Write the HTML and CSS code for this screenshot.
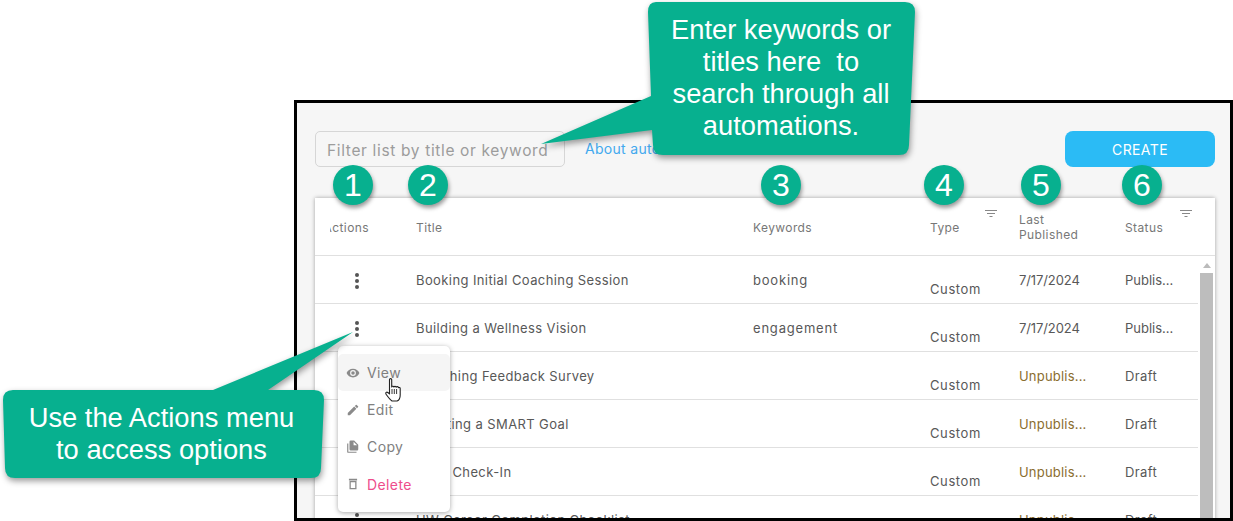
FILE: index.html
```html
<!DOCTYPE html>
<html lang="en">
<head>
    <meta charset="UTF-8">
    <meta name="viewport" content="width=device-width, initial-scale=1.0">
    <title>Automations</title>
    <link rel="stylesheet" href="styles.css">
</head>
<body>
    <div class="frame">
        <div class="toolbar">
            <div class="filter-input">Filter list by title or keyword</div>
            <a class="about-link">About automations</a>
            <button class="create-btn">CREATE</button>
        </div>

        <div class="card">
            <div class="row head">
                <div class="cell actions-head"><span>Actions</span></div>
                <div class="cell">Title</div>
                <div class="cell">Keywords</div>
                <div class="cell filter-cell type-head">
                    <span>Type</span>
                    <svg class="filter-icon" viewBox="0 0 12 7"><path d="M0 0h12v1H0zM2 3h8v1H2zM4.500 6h3v1h-3z"/></svg>
                </div>
                <div class="cell last-head">Last<br>Published</div>
                <div class="cell filter-cell status-head">
                    <span>Status</span>
                    <svg class="filter-icon" viewBox="0 0 12 7"><path d="M0 0h12v1H0zM2 3h8v1H2zM4.500 6h3v1h-3z"/></svg>
                </div>
            </div>

            <div class="body">
                <div class="rows">
                    <div class="row">
                        <div class="cell"><span class="kebab"><i></i><i></i><i></i></span></div>
                        <div class="cell">Booking Initial Coaching Session</div>
                        <div class="cell keyword">booking</div>
                        <div class="cell type">Custom</div>
                        <div class="cell date">7/17/2024</div>
                        <div class="cell published">Publis...</div>
                    </div>
                    <div class="row">
                        <div class="cell"><span class="kebab"><i></i><i></i><i></i></span></div>
                        <div class="cell">Building a Wellness Vision</div>
                        <div class="cell keyword">engagement</div>
                        <div class="cell type">Custom</div>
                        <div class="cell date">7/17/2024</div>
                        <div class="cell published">Publis...</div>
                    </div>
                    <div class="row">
                        <div class="cell"><span class="kebab"><i></i><i></i><i></i></span></div>
                        <div class="cell">Coaching Feedback Survey</div>
                        <div class="cell"></div>
                        <div class="cell type">Custom</div>
                        <div class="cell draft">Unpublis...</div>
                        <div class="cell">Draft</div>
                    </div>
                    <div class="row">
                        <div class="cell"><span class="kebab"><i></i><i></i><i></i></span></div>
                        <div class="cell">Creating a SMART Goal</div>
                        <div class="cell"></div>
                        <div class="cell type">Custom</div>
                        <div class="cell draft">Unpublis...</div>
                        <div class="cell">Draft</div>
                    </div>
                    <div class="row">
                        <div class="cell"><span class="kebab"><i></i><i></i><i></i></span></div>
                        <div class="cell">Daily Check-In</div>
                        <div class="cell"></div>
                        <div class="cell type">Custom</div>
                        <div class="cell draft">Unpublis...</div>
                        <div class="cell">Draft</div>
                    </div>
                    <div class="row">
                        <div class="cell"><span class="kebab"><i></i><i></i><i></i></span></div>
                        <div class="cell">HW Career Completion Checklist</div>
                        <div class="cell"></div>
                        <div class="cell type">Custom</div>
                        <div class="cell draft">Unpublis...</div>
                        <div class="cell">Draft</div>
                    </div>
                </div>
                <div class="scrollbar">
                    <div class="scroll-arrow"></div>
                    <div class="scroll-thumb"></div>
                </div>
            </div>
        </div>
    </div>

    <!-- actions menu -->
    <div class="menu">
        <div class="menu-item hover">
            <svg viewBox="0 0 24 24"><path d="M12 4.500C7 4.500 2.700 7.600 1 12c1.700 4.400 6 7.500 11 7.500s9.300-3.100 11-7.500c-1.700-4.400-6-7.500-11-7.500zM12 17a5 5 0 1 1 0-10 5 5 0 0 1 0 10zm0-8a3 3 0 1 0 0 6 3 3 0 0 0 0-6z"/></svg>
            <span>View</span>
        </div>
        <div class="menu-item">
            <svg viewBox="0 0 24 24"><path d="M3 17.250V21h3.750L17.810 9.940l-3.750-3.750L3 17.250zM20.710 7.040a1 1 0 0 0 0-1.410l-2.340-2.340a1 1 0 0 0-1.410 0l-1.830 1.830 3.750 3.750 1.830-1.830z"/></svg>
            <span>Edit</span>
        </div>
        <div class="menu-item">
            <svg viewBox="0 0 24 24"><path d="M4 6H2v14a2 2 0 0 0 2 2h14v-2H4V6zm10-5H8a2 2 0 0 0-2 2v13a2 2 0 0 0 2 2h11a2 2 0 0 0 2-2V8l-7-7zm-1 8V3l6 6h-6z"/></svg>
            <span>Copy</span>
        </div>
        <div class="menu-item delete">
            <svg viewBox="0 0 24 24"><path d="M5 3h14v3H5zM6 7h12v14H6zm2.200 2v10h7.600V9z" fill-rule="evenodd"/></svg>
            <span>Delete</span>
        </div>
    </div>

    <svg class="hand" viewBox="0 0 17 24">
        <path d="M4.500 1.600c0-1.300 2.200-1.300 2.200 0V9c0-1 2.100-1.200 2.300.1 0-1 2.100-1.100 2.300.2.100-.9 2.100-1 2.200.3.700-.4 1.700 0 1.700 1V17c0 3-1.700 5.500-3.100 6H7C5.500 22 3.800 20 1.600 17 .5 15.500.5 14.500 1.500 14.200c.9-.2 2 .6 3 1.800z" fill="#fff" stroke="#222" stroke-width="1.100" stroke-linejoin="round"/>
        <path d="M7 11v5M9.300 11v5M11.600 11v5" stroke="#222" stroke-width=".9" fill="none"/>
    </svg>

    <!-- callouts -->
    <svg class="callout-shape" viewBox="0 0 1233 521">
        <path d="M656 2H905Q915 2 915 12L909 145Q909 155 899 155H663Q653 155 653 145L652 130L541 144L651 96L648 12Q648 2 656 2Z"/>
        <path d="M13 390H213L353 332L268 390H314Q324 390 324 400L321 468Q321 478 311 478H15Q5 478 5 468L3 400Q3 390 13 390Z"/>
    </svg>
    <div class="callout callout-search">Enter keywords or<br>titles here&nbsp; to<br>search through all<br>automations.</div>
    <div class="callout callout-actions">Use the Actions menu<br>to access options</div>

    <div class="badge b1">1</div>
    <div class="badge b2">2</div>
    <div class="badge b3">3</div>
    <div class="badge b4">4</div>
    <div class="badge b5">5</div>
    <div class="badge b6">6</div>
</body>
</html>
```
FILE: styles.css
```css
* {
    margin: 0;
    padding: 0;
    box-sizing: border-box;
}

html, body {
    height: 521px;
    overflow: hidden;
}

body {
    position: relative;
    background: #fff;
    padding: 100px 0 0 294px;
    font-family: Inter, 'Open Sans', sans-serif;
    color: #585858;
}

.frame {
    height: 421px;
    width: 939px;
    border: 3px solid #000;
    background: #f6f6f6;
    padding: 28px 15px 0 18px;
    overflow: hidden;
}

.toolbar {
    display: flex;
    align-items: center;
    height: 36px;
    margin-bottom: 31px;
}

.filter-input {
    width: 250px;
    height: 36px;
    border: 1px solid #d6d6d6;
    border-radius: 5px;
    padding: 1px 11px 0;
    line-height: 36px;
    font-size: 15.5px;
    letter-spacing: 0.65px;
    white-space: nowrap;
    color: #9c9c9c;
}

.about-link {
    margin-left: 20px;
    padding-bottom: 2px;
    font-size: 14px;
    letter-spacing: 0.3px;
    color: #42a9ee;
}

.create-btn {
    margin-left: auto;
    width: 150px;
    height: 36px;
    border: 0;
    border-radius: 8px;
    background: #2bbbf5;
    color: #fff;
    font-family: inherit;
    font-size: 14px;
    letter-spacing: 0.4px;
}

.card {
    width: 900px;
    height: 340px;
    background: #fff;
    box-shadow: 0 0 4px rgba(0, 0, 0, 0.35);
}

.row {
    display: grid;
    grid-template-columns: 101px 337px 177px 89px 106px 73px;
    align-items: center;
    height: 48px;
    border-bottom: 1px solid #e0e0e0;
    font-size: 13px;
    letter-spacing: 0.4px;
}

.head {
    height: 58px;
    padding-top: 2px;
    font-size: 12px;
    color: #777;
    grid-template-columns: 101px 337px 177px 89px 106px 90px;
}

.actions-head {
    padding-left: 15px;
}

.actions-head span {
    display: block;
    width: 39px;
    overflow: hidden;
    white-space: nowrap;
    direction: rtl;
}

.filter-cell {
    display: flex;
    justify-content: space-between;
    height: 100%;
    align-items: center;
}

.type-head {
    padding-right: 22px;
}

.status-head {
    padding-right: 23px;
}

.filter-icon {
    width: 12px;
    height: 7px;
    align-self: flex-start;
    margin-top: 10px;
    fill: #888;
}

.last-head {
    line-height: 15px;
    padding-bottom: 2px;
}

.body {
    display: flex;
    height: 282px;
}

.rows {
    width: 883px;
}

.keyword {
    letter-spacing: 0.8px;
}

.type {
    padding-top: 18px;
    letter-spacing: 0.6px;
}

.date {
    letter-spacing: -0.1px;
}

.published {
    letter-spacing: 0;
}

.draft {
    letter-spacing: 0.2px;
    color: #8a6d2f;
}

.kebab {
    display: flex;
    flex-direction: column;
    align-items: center;
    gap: 2px;
    width: 84px;
    padding-top: 2px;
}

.kebab i {
    width: 4px;
    height: 4px;
    border-radius: 50%;
    background: #555;
}

.scrollbar {
    margin-left: 2px;
    width: 13px;
}

.scroll-arrow {
    height: 17px;
    padding-top: 7px;
}

.scroll-arrow::after {
    content: "";
    display: block;
    width: 0;
    margin: 0 auto;
    border-left: 4px solid transparent;
    border-right: 4px solid transparent;
    border-bottom: 5px solid #bbb;
}

.scroll-thumb {
    height: 264px;
    background: #bdbdbd;
}

.menu {
    position: absolute;
    left: 338px;
    top: 346px;
    width: 112px;
    height: 166px;
    padding-top: 8px;
    background: #fff;
    border-radius: 5px;
    box-shadow: 0 1px 5px rgba(0, 0, 0, 0.35);
}

.menu-item {
    display: flex;
    align-items: center;
    gap: 7px;
    height: 37px;
    padding-left: 8px;
    font-size: 14px;
    letter-spacing: 0.4px;
    color: #808080;
}

.menu-item svg {
    width: 14px;
    height: 14px;
    fill: #8a8a8a;
}

.menu-item.hover {
    background: #f5f5f5;
    border-radius: 5px;
}

.menu-item.delete {
    color: #ee4d8b;
    padding-top: 1px;
}

.hand {
    position: absolute;
    left: 385px;
    top: 378px;
    width: 17px;
    height: 24px;
}

.callout-shape {
    position: absolute;
    left: 0;
    top: 0;
    width: 1233px;
    height: 521px;
    fill: #07b08f;
    filter: drop-shadow(1px 3px 3px rgba(0, 0, 0, 0.4));
}

.callout {
    position: absolute;
    text-align: center;
    color: #fff;
    font-family: 'Liberation Sans', Arial, sans-serif;
    font-size: 27.3px;
    line-height: 32px;
}

.callout-search {
    left: 648px;
    top: 14px;
    width: 266px;
}

.callout-actions {
    left: 3px;
    top: 402px;
    width: 317px;
}

.badge {
    position: absolute;
    top: 165px;
    width: 40px;
    height: 40px;
    border-radius: 50%;
    background: #07b08f;
    box-shadow: 1px 3px 4px rgba(0, 0, 0, 0.4);
    color: #fff;
    font-family: 'Liberation Sans', Arial, sans-serif;
    font-size: 32px;
    line-height: 40px;
    text-align: center;
}

.b1 { left: 333px; }
.b2 { left: 408px; }
.b3 { left: 761px; }
.b4 { left: 924px; }
.b5 { left: 1021px; }
.b6 { left: 1122px; }
```
